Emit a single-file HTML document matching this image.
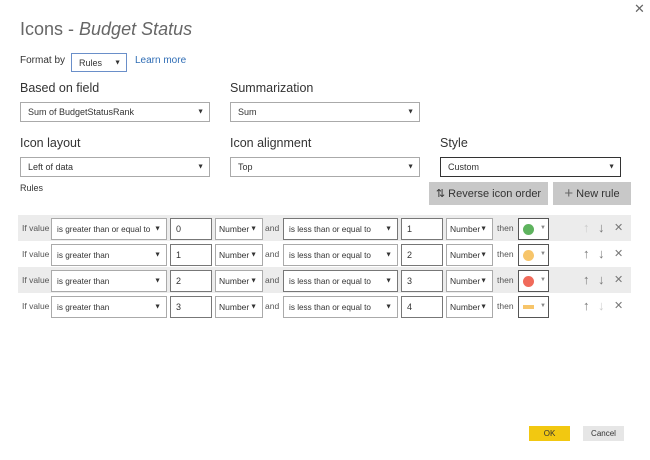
<!DOCTYPE html><html><head><style>
*{box-sizing:border-box;margin:0;padding:0}
body{width:650px;height:460px;background:#fff;font-family:"Liberation Sans",sans-serif;color:#333;position:relative;overflow:hidden}
.a{position:absolute}
.sel{position:absolute;border:1px solid #aaa;background:#fff;font-size:9px;padding-left:7px;display:flex;align-items:center;color:#333;white-space:nowrap;overflow:hidden}
.sel:after{content:"▼";position:absolute;right:5px;font-size:7px;top:50%;transform:translateY(-50%);background:#fff}
.r{font-size:8.2px;padding-left:5px}
.n{font-size:8.5px;padding-left:3px}
.lbl{position:absolute;font-size:12.5px;color:#333}
.row{position:absolute;left:18px;width:613px;height:26px}
.s{font-size:8.5px;color:#555}
.inp{position:absolute;border:1px solid #aaa;background:#fff;font-size:9px;padding-left:5px;display:flex;align-items:center}
.btn{position:absolute;background:#c8c8c8;font-size:11px;display:flex;align-items:center;justify-content:center;color:#333}
.ar{position:absolute;font-size:13px;color:#777}
</style></head><body>
<div class="a" style="left:634px;top:1px;font-size:13px;color:#666">✕</div>
<div class="a" style="left:20px;top:19px;font-size:18px;color:#666">Icons - <i>Budget Status</i></div>
<div class="a" style="left:20px;top:55px;font-size:10px">Format by</div>
<div class="sel" style="left:71px;top:53px;width:56px;height:19px;border-color:#6a8fc9">Rules</div>
<div class="a" style="left:135px;top:55px;font-size:10px;color:#2f6db5">Learn more</div>
<div class="lbl" style="left:20px;top:81px">Based on field</div>
<div class="lbl" style="left:230px;top:81px">Summarization</div>
<div class="sel" style="left:20px;top:102px;width:190px;height:20px">Sum of BudgetStatusRank</div>
<div class="sel" style="left:230px;top:102px;width:190px;height:20px">Sum</div>
<div class="lbl" style="left:20px;top:136px">Icon layout</div>
<div class="lbl" style="left:230px;top:136px">Icon alignment</div>
<div class="lbl" style="left:440px;top:136px">Style</div>
<div class="sel" style="left:20px;top:157px;width:190px;height:20px">Left of data</div>
<div class="sel" style="left:230px;top:157px;width:190px;height:20px">Top</div>
<div class="sel" style="left:440px;top:157px;width:181px;height:20px;border-color:#333">Custom</div>
<div class="a" style="left:20px;top:183px;font-size:9px">Rules</div>
<div class="btn" style="left:429px;top:182px;width:119px;height:23px">⇅ Reverse icon order</div>
<div class="btn" style="left:553px;top:182px;width:78px;height:23px"><span style="font-size:15px;margin-right:3px;color:#666">+</span>New rule</div>

<div class="row" style="top:215px;background:#ececec"></div>
<div class="row" style="top:267px;background:#ececec"></div>

<div class="a s" style="left:22px;top:223px">If value</div>
<div class="sel r" style="left:51px;top:218px;width:116px;height:22px">is greater than or equal to</div>
<div class="inp" style="left:170px;top:218px;width:42px;height:22px;border-color:#777">0</div>
<div class="sel n" style="left:215px;top:218px;width:48px;height:22px">Number</div>
<div class="a s" style="left:265px;top:223px">and</div>
<div class="sel r" style="left:283px;top:218px;width:115px;height:22px;border-color:#777">is less than or equal to</div>
<div class="inp" style="left:401px;top:218px;width:42px;height:22px;border-color:#777">1</div>
<div class="sel n" style="left:446px;top:218px;width:47px;height:22px">Number</div>
<div class="a s" style="left:497px;top:223px">then</div>

<div class="a s" style="left:22px;top:249px">If value</div>
<div class="sel r" style="left:51px;top:244px;width:116px;height:22px">is greater than</div>
<div class="inp" style="left:170px;top:244px;width:42px;height:22px;border-color:#777">1</div>
<div class="sel n" style="left:215px;top:244px;width:48px;height:22px">Number</div>
<div class="a s" style="left:265px;top:249px">and</div>
<div class="sel r" style="left:283px;top:244px;width:115px;height:22px">is less than or equal to</div>
<div class="inp" style="left:401px;top:244px;width:42px;height:22px;border-color:#777">2</div>
<div class="sel n" style="left:446px;top:244px;width:47px;height:22px">Number</div>
<div class="a s" style="left:497px;top:249px">then</div>

<div class="a s" style="left:22px;top:275px">If value</div>
<div class="sel r" style="left:51px;top:270px;width:116px;height:22px">is greater than</div>
<div class="inp" style="left:170px;top:270px;width:42px;height:22px;border-color:#777">2</div>
<div class="sel n" style="left:215px;top:270px;width:48px;height:22px">Number</div>
<div class="a s" style="left:265px;top:275px">and</div>
<div class="sel r" style="left:283px;top:270px;width:115px;height:22px;border-color:#777">is less than or equal to</div>
<div class="inp" style="left:401px;top:270px;width:42px;height:22px;border-color:#777">3</div>
<div class="sel n" style="left:446px;top:270px;width:47px;height:22px">Number</div>
<div class="a s" style="left:497px;top:275px">then</div>

<div class="a s" style="left:22px;top:301px">If value</div>
<div class="sel r" style="left:51px;top:296px;width:116px;height:22px">is greater than</div>
<div class="inp" style="left:170px;top:296px;width:42px;height:22px;border-color:#777">3</div>
<div class="sel n" style="left:215px;top:296px;width:48px;height:22px">Number</div>
<div class="a s" style="left:265px;top:301px">and</div>
<div class="sel r" style="left:283px;top:296px;width:115px;height:22px">is less than or equal to</div>
<div class="inp" style="left:401px;top:296px;width:42px;height:22px;border-color:#777">4</div>
<div class="sel n" style="left:446px;top:296px;width:47px;height:22px">Number</div>
<div class="a s" style="left:497px;top:301px">then</div>

<div class="a" style="left:518px;top:218px;width:31px;height:22px;border:1px solid #555;background:#fff"><div class="a" style="left:4px;top:5px;width:11px;height:11px;border-radius:50%;background:#5eb35e"></div><div class="a" style="left:21px;top:6px;font-size:6px;color:#888">▼</div></div>
<div class="a" style="left:518px;top:244px;width:31px;height:22px;border:1px solid #555;background:#fff"><div class="a" style="left:4px;top:5px;width:11px;height:11px;border-radius:50%;background:#f7c56a"></div><div class="a" style="left:21px;top:6px;font-size:6px;color:#888">▼</div></div>
<div class="a" style="left:518px;top:270px;width:31px;height:22px;border:1px solid #555;background:#fff"><div class="a" style="left:4px;top:5px;width:11px;height:11px;border-radius:50%;background:#f06a5a"></div><div class="a" style="left:21px;top:6px;font-size:6px;color:#888">▼</div></div>
<div class="a" style="left:518px;top:296px;width:31px;height:22px;border:1px solid #555;background:#fff"><div class="a" style="left:4px;top:8px;width:11px;height:4px;background:#f7c56a"></div><div class="a" style="left:21px;top:6px;font-size:6px;color:#888">▼</div></div>

<div class="ar" style="left:583px;top:220px;color:#ccc">↑</div><div class="ar" style="left:598px;top:220px">↓</div><div class="ar" style="left:614px;top:221px;font-size:11px">✕</div>
<div class="ar" style="left:583px;top:246px">↑</div><div class="ar" style="left:598px;top:246px">↓</div><div class="ar" style="left:614px;top:247px;font-size:11px">✕</div>
<div class="ar" style="left:583px;top:272px">↑</div><div class="ar" style="left:598px;top:272px">↓</div><div class="ar" style="left:614px;top:273px;font-size:11px">✕</div>
<div class="ar" style="left:583px;top:298px">↑</div><div class="ar" style="left:598px;top:298px;color:#ccc">↓</div><div class="ar" style="left:614px;top:299px;font-size:11px">✕</div>

<div class="btn" style="left:529px;top:426px;width:41px;height:15px;background:#f2c811;font-size:8px">OK</div>
<div class="btn" style="left:583px;top:426px;width:41px;height:15px;background:#e6e6e6;font-size:8px">Cancel</div>
</body></html>
